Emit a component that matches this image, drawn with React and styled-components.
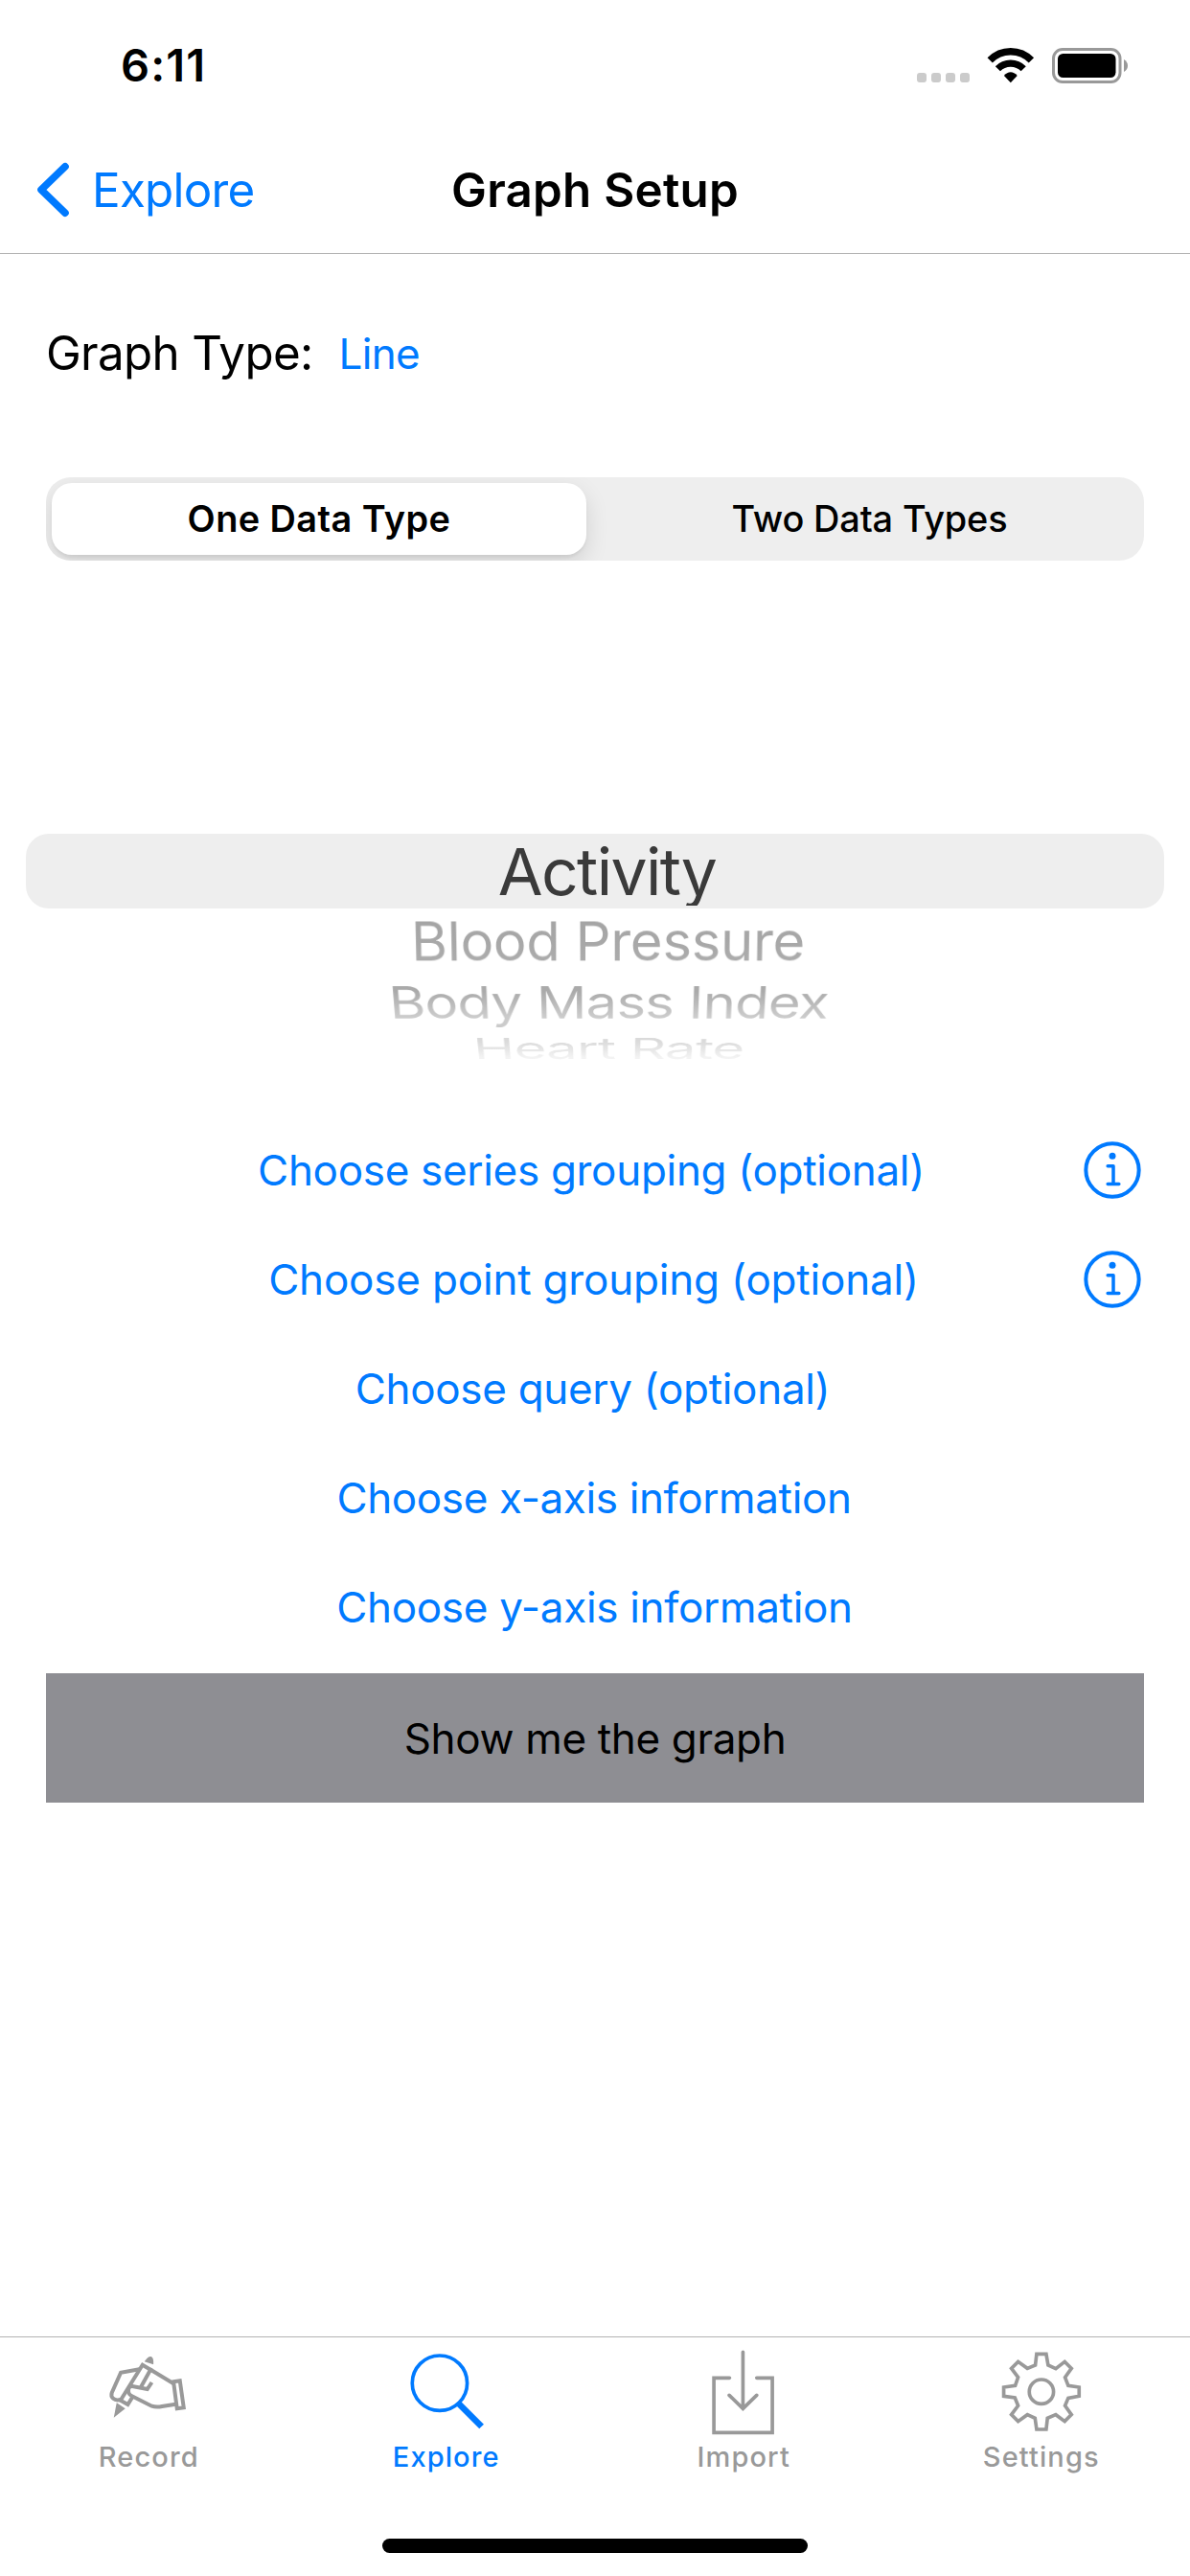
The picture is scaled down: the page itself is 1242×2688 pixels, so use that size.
import React, { useState } from "react";
import styled, { createGlobalStyle, css } from "styled-components";

const BLUE = "#007aff";
const GRAY = "#999999";

const GlobalStyle = createGlobalStyle`
  *, *::before, *::after { box-sizing: border-box; }
  body {
    margin: 0;
    background: #fff;
    color: #000;
    font-family: Inter, "Liberation Sans", sans-serif;
  }
  button {
    margin: 0;
    padding: 0;
    border: 0;
    background: none;
    font: inherit;
    color: inherit;
  }
  svg { overflow: visible; }
`;

const Screen = styled.div`
  display: flex;
  flex-direction: column;
  width: 1242px;
  height: 2688px;
  background: #fff;
  white-space: nowrap;
  overflow: hidden;
`;

/* Status bar */
const StatusBar = styled.header`
  display: flex;
  justify-content: space-between;
  align-items: center;
  height: 132px;
  padding: 4px 64px 0 126px;
`;

const Clock = styled.time`
  padding-bottom: 2px;
  font-size: 47px;
  font-weight: 600;
  letter-spacing: 1.1px;
`;

const StatusIcons = styled.div`
  display: flex;
  align-items: flex-end;
  height: 37px;
`;

const SignalDots = styled.div`
  display: flex;
  gap: 5px;
  margin: 0 19px 1px 0;
`;

const SignalDot = styled.span`
  width: 10px;
  height: 10px;
  border-radius: 3px;
  background: #cbcbcb;
`;

const WifiGlyph = styled.svg`
  width: 48px;
  height: 37px;
  margin-right: 19px;
`;

const BatteryGlyph = styled.svg`
  width: 80px;
  height: 37px;
`;

/* Navigation bar */
const NavBar = styled.nav`
  display: grid;
  grid-template-columns: 1fr auto 1fr;
  align-items: center;
  height: 133px;
  padding: 0 38px;
  border-bottom: 1px solid #b2b2b2;
`;

const BackButton = styled.button`
  display: flex;
  align-items: center;
  gap: 24px;
  color: ${BLUE};
  font-size: 49.3px;
  letter-spacing: -0.74px;
`;

const Chevron = styled.svg`
  width: 34px;
  height: 58px;
`;

const NavTitle = styled.h1`
  margin: 0;
  font-size: 49.3px;
  font-weight: 600;
  letter-spacing: 0.25px;
`;

/* Form content */
const Content = styled.main`
  flex: 1;
  display: flex;
  flex-direction: column;
`;

const GraphTypeRow = styled.div`
  display: flex;
  align-items: center;
  gap: 27px;
  height: 70px;
  margin: 68px 48px 95px;
`;

const GraphTypeLabel = styled.span`
  font-size: 49.3px;
  letter-spacing: -0.66px;
`;

const GraphTypeValue = styled.button`
  color: ${BLUE};
  font-size: 44px;
  letter-spacing: -0.68px;
  padding-top: 2px;
`;

const Segmented = styled.div`
  display: grid;
  grid-template-columns: 1fr 1fr;
  height: 87px;
  margin: 0 48px;
  border-radius: 26px;
  background: #eeeeee;
  overflow: hidden;
`;

const Segment = styled.button`
  padding-bottom: 1px;
  font-size: 37.9px;
  font-weight: 500;
  letter-spacing: -0.15px;
  ${({ $selected }) =>
    $selected &&
    css`
      margin: 6px 9px 6px 6px;
      border-radius: 21px;
      background: #fff;
      box-shadow: 0 9px 24px rgba(0, 0, 0, 0.12), 0 3px 3px rgba(0, 0, 0, 0.05);
      font-weight: 600;
      letter-spacing: 0.43px;
    `}
`;

const Picker = styled.div`
  display: flex;
  flex-direction: column;
  height: 579px;
  padding-top: 285px;
`;

const PickerSelection = styled.div`
  height: 78px;
  margin: 0 27px;
  border-radius: 24px;
  background: #eeeeee;
`;

const PickerSelectedText = styled.div`
  height: 75px;
  padding-left: 25px;
  overflow: hidden;
  text-align: center;
  color: #3a3a3a;
  font-size: 67.8px;
  line-height: 78px;
  letter-spacing: -1.6px;
`;

const PickerOption = styled.div`
  display: flex;
  justify-content: center;
  align-items: center;
  height: ${({ $height }) => $height}px;
  padding-left: 28px;
`;

const WheelText = styled.span`
  color: transparent;
  background: linear-gradient(${({ $from, $to }) => `${$from} 30%, ${$to} 75%`});
  background-clip: text;
  font-size: 58.1px;
  line-height: 72px;
  letter-spacing: ${({ $tracking }) => $tracking}px;
  transform: perspective(2100px) rotateX(${({ $tilt }) => -$tilt}deg);
`;

const OptionRow = styled.div`
  display: grid;
  grid-template-columns: 61px 1fr 61px;
  align-items: center;
  height: 114px;
  padding: 0 51px;
`;

const OptionLink = styled.button`
  grid-column: 2;
  padding-right: ${({ $inset }) => $inset}px;
  color: ${BLUE};
  font-size: 44px;
  letter-spacing: ${({ $tracking }) => $tracking}px;
`;

const InfoButton = styled.button`
  display: flex;
  justify-content: flex-end;
  color: ${BLUE};
`;

const InfoGlyph = styled.svg`
  width: 60px;
  height: 60px;
`;

const ShowButton = styled.button`
  height: 135px;
  margin: 12px 48px 0;
  background: #8e8e93;
  color: #000;
  font-size: 44px;
  letter-spacing: -0.34px;
`;

/* Tab bar */
const TabBar = styled.footer`
  display: flex;
  flex-direction: column;
  justify-content: space-between;
  align-items: center;
  height: 250px;
  padding-bottom: 24px;
  border-top: 1px solid #b2b2b2;
`;

const Tabs = styled.div`
  display: grid;
  grid-template-columns: repeat(4, 1fr);
  width: 100%;
`;

const Tab = styled.button`
  display: flex;
  flex-direction: column;
  align-items: center;
  color: ${({ $active }) => ($active ? BLUE : GRAY)};
`;

const TabGlyph = styled.svg`
  width: 150px;
  height: 100px;
  fill: none;
  stroke: currentColor;
`;

const TabLabel = styled.span`
  margin-top: 6px;
  font-size: 29px;
  font-weight: 500;
  line-height: 38px;
  letter-spacing: 1.1px;
`;

const HomeIndicator = styled.div`
  width: 444px;
  height: 15px;
  border-radius: 8px;
  background: #000;
`;

const WifiIcon = () => (
  <WifiGlyph viewBox="0 0 48 37" aria-hidden="true">
    <g fill="none" stroke="#000">
      <path d="M2.2 12.9A30 30 0 0 1 45.4 12.9" strokeWidth="7.4" />
      <path d="M10.4 21.8A18.7 18.7 0 0 1 37.2 21.8" strokeWidth="7.2" />
    </g>
    <path d="M23.8 36.2L16.9 28.9Q20 25.3 23.8 25.3T30.7 28.9Z" />
  </WifiGlyph>
);

const BatteryIcon = () => (
  <BatteryGlyph viewBox="0 0 80 37" aria-hidden="true">
    <rect x="1.5" y="1.5" width="69.5" height="34" rx="9.5" fill="none" stroke="#999" strokeWidth="3" />
    <rect x="6" y="6" width="60.5" height="25" rx="5.5" />
    <path d="M75 12Q79 14.5 79 18.5T75 25Z" fill="#999" />
  </BatteryGlyph>
);

const InfoIcon = () => (
  <InfoGlyph viewBox="46.5 33 180 180" fill="none" stroke="currentColor" strokeLinecap="round">
    <circle cx="136.5" cy="123" r="83" strokeWidth="12" />
    <circle cx="136.5" cy="79" r="10.5" fill="currentColor" stroke="none" />
    <path d="M122 110.5H139.5V166M122 166.5H157" strokeWidth="10.5" strokeLinejoin="round" />
  </InfoGlyph>
);

const RecordIcon = () => (
  <TabGlyph viewBox="0.75 27 450 300" strokeWidth="12">
    <path d="M213 103C221 91 227 86 234 87Q243 91 241 112Z" fill="currentColor" stroke="none" />
    <path d="M126 232L153 250L117 278Z" fill="currentColor" stroke="none" />
    <path d="M202 182L232 128L207 113L138 224L161 237L176 213" />
    <path d="M197 127L139 137L111 200C106 215 118 227 138 222" />
    <path d="M236 168L222 189L175 180C168 179 164 183 163 190C161 202 166 207 174 211L236 242Q250 247 268 243L311 236" />
    <path d="M230 127L303 171" />
    <path d="M304 166L324 163L336 247L315 250Z" />
  </TabGlyph>
);

const ExploreIcon = () => (
  <TabGlyph viewBox="2.25 27 450 300">
    <circle cx="206" cy="170" r="86" strokeWidth="11" />
    <path d="M265 234L337 306" strokeWidth="20" />
  </TabGlyph>
);

const ImportIcon = () => (
  <TabGlyph viewBox="3.75 27 450 300" strokeWidth="11" strokeLinecap="round">
    <path d="M185 154H136V325H319V154H270" />
    <path d="M227 73V250M184 208L227 250L270 208" />
  </TabGlyph>
);

const SettingsIcon = () => (
  <TabGlyph viewBox="35.25 27 450 300" strokeWidth="11">
    <circle cx="260" cy="197" r="38" />
    <path d="M245 79H275L281 114L305 125L333 103L354 124L334 152L344 178L378 183V211L344 217L334 241L354 269L333 290L305 269L279 280L275 315H245L240 280L216 269L187 290L166 269L187 241L177 216L142 211V183L178 178L187 152L166 124L187 103L216 124L241 114Z" />
  </TabGlyph>
);

const segments = ["One Data Type", "Two Data Types"];

const wheel = [
  { text: "Blood Pressure", height: 68, tilt: 13, tracking: -0.35, from: "#a5a5a5", to: "#ababab" },
  { text: "Body Mass Index", height: 60, tilt: 37, tracking: -0.76, from: "#aaaaaa", to: "#cbcbcb" },
  { text: "Heart Rate", height: 36, tilt: 58, tracking: -0.77, from: "#dadada", to: "#f3f3f3" },
];

const options = [
  { text: "Choose series grouping (optional)", inset: 8, tracking: -0.31, info: true },
  { text: "Choose point grouping (optional)", inset: 3, tracking: -0.19, info: true },
  { text: "Choose query (optional)", inset: 5, tracking: -0.31 },
  { text: "Choose x-axis information", inset: 2, tracking: -0.37 },
  { text: "Choose y-axis information", inset: 1, tracking: -0.31 },
];

const tabs = [
  { text: "Record", Icon: RecordIcon },
  { text: "Explore", Icon: ExploreIcon },
  { text: "Import", Icon: ImportIcon },
  { text: "Settings", Icon: SettingsIcon },
];

export default function App() {
  const [segment, setSegment] = useState(0);
  const [activeTab, setActiveTab] = useState("Explore");

  return (
    <>
      <GlobalStyle />
      <Screen>
        <StatusBar>
          <Clock>6:11</Clock>
          <StatusIcons>
            <SignalDots>
              <SignalDot />
              <SignalDot />
              <SignalDot />
              <SignalDot />
            </SignalDots>
            <WifiIcon />
            <BatteryIcon />
          </StatusIcons>
        </StatusBar>

        <NavBar>
          <BackButton>
            <Chevron viewBox="0 0 34 58" fill="none" stroke="currentColor" strokeWidth="7.6" strokeLinecap="round" strokeLinejoin="round">
              <path d="M30 4.8L5 29L30 53.2" />
            </Chevron>
            Explore
          </BackButton>
          <NavTitle>Graph Setup</NavTitle>
        </NavBar>

        <Content>
          <GraphTypeRow>
            <GraphTypeLabel>Graph Type:</GraphTypeLabel>
            <GraphTypeValue>Line</GraphTypeValue>
          </GraphTypeRow>

          <Segmented>
            {segments.map((text, i) => (
              <Segment key={text} $selected={i === segment} onClick={() => setSegment(i)}>
                {text}
              </Segment>
            ))}
          </Segmented>

          <Picker>
            <PickerSelection>
              <PickerSelectedText>Activity</PickerSelectedText>
            </PickerSelection>
            {wheel.map(({ text, height, tilt, tracking, from, to }) => (
              <PickerOption key={text} $height={height}>
                <WheelText $tilt={tilt} $tracking={tracking} $from={from} $to={to}>
                  {text}
                </WheelText>
              </PickerOption>
            ))}
          </Picker>

          {options.map(({ text, inset, tracking, info }) => (
            <OptionRow key={text}>
              <OptionLink $inset={inset} $tracking={tracking}>
                {text}
              </OptionLink>
              {info && (
                <InfoButton aria-label="More information">
                  <InfoIcon />
                </InfoButton>
              )}
            </OptionRow>
          ))}

          <ShowButton>Show me the graph</ShowButton>
        </Content>

        <TabBar>
          <Tabs>
            {tabs.map(({ text, Icon }) => (
              <Tab key={text} $active={text === activeTab} onClick={() => setActiveTab(text)}>
                <Icon />
                <TabLabel>{text}</TabLabel>
              </Tab>
            ))}
          </Tabs>
          <HomeIndicator />
        </TabBar>
      </Screen>
    </>
  );
}
